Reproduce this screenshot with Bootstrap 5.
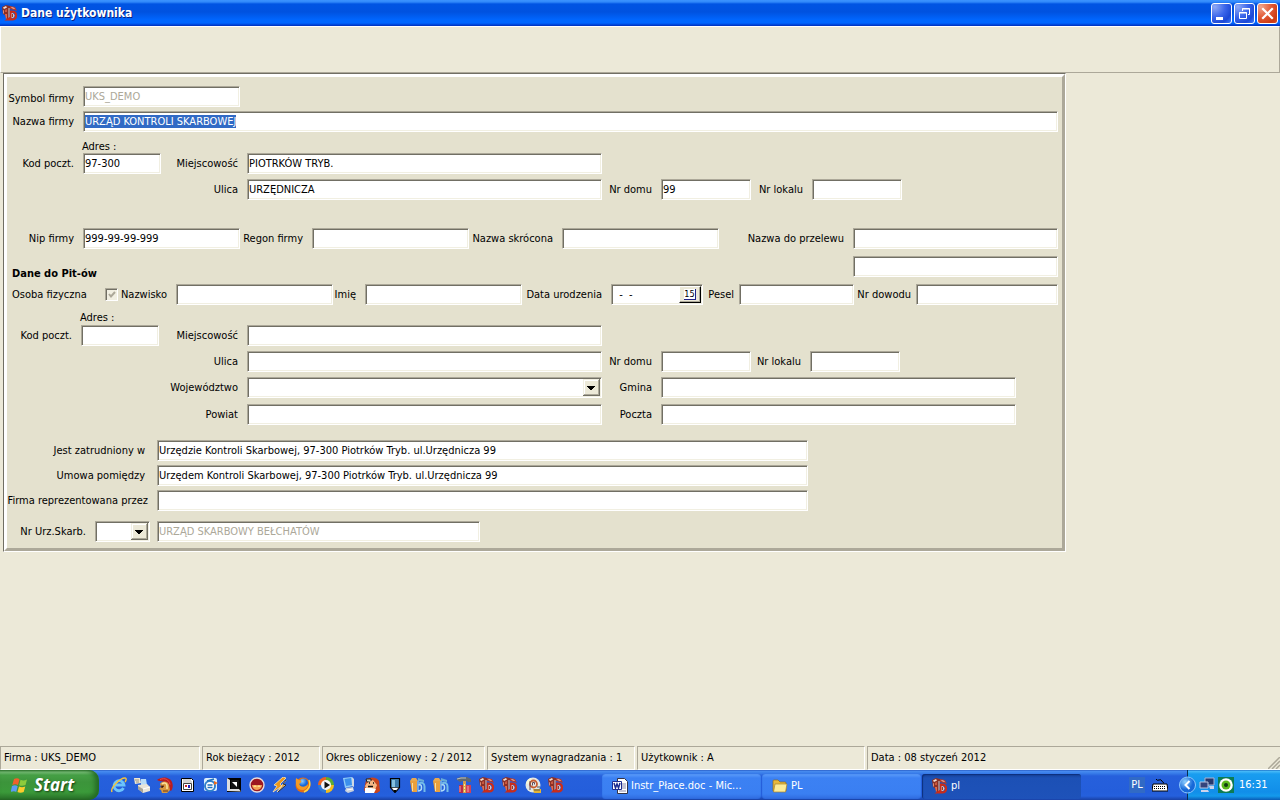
<!DOCTYPE html>
<html lang="pl">
<head>
<meta charset="utf-8">
<meta name="viewport" content="width=device-width, initial-scale=1">
<title>Dane użytkownika</title>
<link href="https://cdn.jsdelivr.net/npm/bootstrap@5.3.0/dist/css/bootstrap.min.css" rel="stylesheet">
<style>
body{font-family:"DejaVu Sans Condensed","DejaVu Sans",sans-serif;font-size:11px;line-height:16px;color:#000;background:#ece9d8}
svg{display:block;flex:none}
/* title bar */
.titlebar{height:26px;padding:0 2px;background:linear-gradient(#3c93ff 0,#3088fa 2px,#0054e3 4px,#0052e0 12px,#0066ff 20px,#0066ff 23px,#0040d4 25px,#002fb8 26px)}
.titlebar h1{font-size:12px;line-height:18px;font-weight:700;color:#fff;text-shadow:1px 1px 0 #0a1f80;padding-left:3px}
.winbtns{gap:2px}
.winbtn{width:21px;height:21px;padding:0;border:1px solid #fff;border-radius:3px;background:radial-gradient(circle at 15% 15%,#8ea9f5,#3b66ea 45%,#1b48d6 75%,#3f7bfa)}
.winbtn.quit{background:radial-gradient(circle at 15% 15%,#f0a58c,#e25a36 45%,#cc3a12 80%,#d8502a)}
.toolstrip{height:47px;border:1px solid;border-color:#fff #aca899 #aca899 #fff}
/* form panel */
.panel-out{max-width:1063px;margin-left:3px;border:1px solid;border-color:#716f64 #fff #fff #716f64}
.panel-in{border:3px solid;border-color:#fff #aca899 #aca899 #fff;background:#e4e1ce;padding:9px 4px 6px 0}
.sp4{margin-top:4px}.sp5{margin-top:5px}.sp6{margin-top:6px}.sp7{margin-top:7px}.sp10{margin-top:10px}.sp15{margin-top:15px}.sp28{margin-top:28px}
.frow{height:21px}
.frow.tall{height:28px}
.frow label{flex:none;text-align:right;padding:1px 9px 0 0;white-space:nowrap}
.frow .tight{padding-right:5px}.frow .wide{padding-right:12px}
.frow .start{text-align:left;padding:1px 0 0 5px}
.adres{line-height:14px;padding:1px 0 0 75px;height:14px}
.adres.low{padding:0 0 0 73px}
.box{height:21px;min-width:0;padding:0 0 1px 1px;font-size:11px;line-height:16px;color:#000;background:#fff;border:1px solid;border-color:#aca899 #fff #fff #aca899;border-radius:0;box-shadow:inset 1px 1px #716f64,inset -1px -1px #f1efe2;outline:0}
.box:disabled{color:#aca899;opacity:1}
.box::selection{background:#316ac5;color:#fff}
.w-c1{width:76px}.w-c2{width:86px}.w-74{width:74px}.w-88{width:88px}.w-u{width:240px}.w-dom{width:59px}.w-lok{width:61px}
.w-150{width:150px}
.i-code{width:78px}.i-mid{width:157px}.i-city{width:355px}.i-nr{width:90px}.i-long{width:651px}.i-pay{width:205px}
.w-72{width:72px}.w-93{width:93px}.w-134{width:134px}.w-98{width:98px}.w-58{width:58px}.w-32{width:32px}.w-89{width:89px}.w-36{width:36px}.w-62{width:62px}
.i-115{width:115px}.i-142{width:142px}.i-322{width:323px}.i-combo{width:55px;margin-right:7px}.i-date{width:92px}
.pit{font-weight:700;padding:0 0 2px 5px;flex:1;align-self:flex-end}
.tick{appearance:none;width:13px;height:13px;margin:0;border:1px solid;border-color:#aca899 #fff #fff #aca899;box-shadow:inset 1px 1px #716f64;background:#f1efe2 url("data:image/svg+xml,%3Csvg xmlns='http://www.w3.org/2000/svg' viewBox='0 0 11 11'%3E%3Cpath d='M3 5l2 2.500 4-4.500' fill='none' stroke='%23aca899' stroke-width='2'/%3E%3C/svg%3E")}
.combo{appearance:none;background:#fff url("data:image/svg+xml,%3Csvg xmlns='http://www.w3.org/2000/svg' width='17' height='17' shape-rendering='crispEdges'%3E%3Cpath fill='%23716f64' d='M0 0h17v17H0z'/%3E%3Cpath fill='%23f1efe2' d='M0 0h16v16H0z'/%3E%3Cpath fill='%23aca899' d='M1 1h15v15H1z'/%3E%3Cpath fill='%23fff' d='M1 1h14v14H1z'/%3E%3Cpath fill='%23ece9d8' d='M2 2h13v13H2z'/%3E%3Cpath d='M4 7h8v1H4zM5 8h6v1H5zM6 9h4v1H6zM7 10h2v1H7z'/%3E%3C/svg%3E") right 1px top 1px no-repeat}
.datebox{display:flex;padding:1px}
.datebox input{border:0;flex:1;min-width:0;padding:0 0 0 3px;background:none;outline:0}
.calbtn{width:22px;height:17px;padding:0 0 1px;display:grid;place-items:center;background:#ece9d8;border:1px solid;border-color:#fff #000 #000 #fff;box-shadow:inset -1px -1px #aca899}
.calbtn span{font-size:9px;line-height:10px;width:12px;height:11px;background:#fff;border-right:1px solid #228;border-bottom:1px solid #228;color:#000}
/* status bar */
.statusbar{gap:2px;height:24px}
.statusbar div{border:1px solid;border-color:#aca899 #fff #fff #aca899;padding:3px 0 0 3px;white-space:nowrap;overflow:hidden}
.st-a{width:200px}.st-b{width:118px}.st-c{width:163px}.st-d{width:148px}.st-e{width:228px}
.statusbar .st-f{display:flex;justify-content:space-between;border-right:0}
.grip{align-self:flex-end}
/* task bar */
.taskbar{height:30px;background:linear-gradient(#1f4fb8 0,#4a8df0 1px,#3a7fea 3px,#2660dc 6px,#245edb 22px,#2560dd 26px,#1941a5 30px)}
.startbtn{width:99px;border:0;padding:0 0 0 11px;gap:5px;border-radius:0 10px 10px 0;color:#fff;font:italic 700 17px/28px "Open Sans","Noto Sans",sans-serif;text-shadow:1px 1px 2px #153d12;background:linear-gradient(#357a35 0,#7fc47d 2px,#46a046 5px,#3c943b 12px,#3b9a3a 22px,#2d7a2c 28px,#235f22);box-shadow:inset -4px 0 5px #246a25}
.quick{padding-left:12px;gap:7px}
.task{width:159px;height:25px;border:0;border-radius:3px;padding:0 0 0 10px;gap:3px;color:#fff;text-align:left;background:linear-gradient(#5c9dfb,#3c81f3 4px,#3a7ff2 20px,#2f6ade);box-shadow:inset 0 0 1px #1a4fc0}
.task.now{background:linear-gradient(#153f93,#1c50b5 4px,#1e52b9);box-shadow:inset 1px 1px 1px #0d2f7c}
.tasks{gap:1px;padding-top:2px}
.lang{color:#fff;background:#316ac5;width:16px;padding:0;border:0;margin:0 7px 0 48px}
.tray{width:93px;height:30px;margin-left:19px;color:#fff;gap:3px;background:linear-gradient(#0c59b9 0,#4cbcf8 1px,#199df0 4px,#118ee9 22px,#149aec 26px,#0a5bb5 30px);border-left:1px solid #092e51}
.tray .fold{margin-left:-9px}
.tray time{padding-left:2px}
</style>
</head>
<body>
<svg width="0" height="0" class="position-absolute">
<defs>
<radialGradient id="ball" cx=".35" cy=".3"><stop offset="0" stop-color="#8fd0ff"/><stop offset="1" stop-color="#1668d8"/></radialGradient>
</defs>
<symbol id="redb" viewBox="0 0 16 16"><path d="M0 2l4-2 4 1v4l-1 9-2 1-2-5-2-1z" fill="#8c3026"/><path d="M1 2.500L4 1l1 1.500L2 4z" fill="#f0dcd0"/><path d="M1 5l1 .5V9L1 8z" fill="#d88c78"/><path d="M3 9h2v4l-1 1z" fill="#e4684c"/><path d="M3 5l2-1v3H3z" fill="#c85840"/><path d="M7 3v10" stroke="#b8b4bc" stroke-width="1.200"/><path d="M8 1l5 1 2 4-3-1-4-1z" fill="#b43c2c"/><path d="M9.500 2.500l3 1" stroke="#f4c0b0"/><path d="M9 6.500h1q4 0 4 4t-4 4H6l3-2z" fill="none" stroke="#cc2c18" stroke-width="2.200"/><path d="M9.500 8h1q2 .5 2 2.500t-2 2.500h-1z" fill="#dcc4c0"/><path d="M10.500 9v3" stroke="#8c3c34"/></symbol>
<symbol id="blueb" viewBox="0 0 16 16"><path d="M0 4h7v11H2z" fill="#eaa03c"/><path d="M0 4l2-3h4l2 3z" fill="#e8a850"/><path d="M2.500 6v8" stroke="#fbdca0" fill="none"/><path d="M8 4v9" stroke="#8cc4ec" stroke-width="1.400"/><path d="M9 6.500c3-2 5.500 0 5.500 3V15" fill="none" stroke="#74bce8" stroke-width="2"/><path d="M8.500 8c3-1 3 1 3 3s-1 3-4 3" stroke="#b0dcf8" stroke-width="1.500" fill="none"/><path d="M8 1l6 2v2L8 4z" fill="#68acd8"/></symbol>
</svg>
<div class="d-flex flex-column min-vh-100">
<header class="titlebar d-flex align-items-center">
<svg width="16" height="16"><use href="#redb"/></svg>
<h1 class="mb-0 me-auto">Dane użytkownika</h1>
<div class="winbtns d-flex">
<button class="winbtn" aria-label="Minimalizuj"><svg width="19" height="19"><path d="M4 13h7v3H4z" fill="#fff"/></svg></button>
<button class="winbtn" aria-label="Przywróć"><svg width="19" height="19" fill="none" stroke="#fff"><path d="M4.500 8.500h7v6h-7zM4 9h8M7.500 7V4.500h7v6H13M7 5h8"/></svg></button>
<button class="winbtn quit" aria-label="Zamknij"><svg width="19" height="19"><path d="M5 5l9 9M14 5l-9 9" stroke="#fff" stroke-width="2.200" stroke-linecap="square"/></svg></button>
</div>
</header>
<div class="toolstrip"></div>
<main class="flex-grow-1">
<div class="panel-out"><form class="panel-in">
<div class="frow d-flex align-items-end"><label class="w-c1" for="sym">Symbol firmy</label><input class="box i-mid" id="sym" value="UKS_DEMO" disabled></div>
<div class="frow d-flex align-items-center sp4"><label class="w-c1" for="naz">Nazwa firmy</label><input class="box flex-grow-1" id="naz" value="URZĄD KONTROLI SKARBOWEJ"></div>
<div class="adres sp7">Adres :</div>
<div class="frow d-flex align-items-center"><label class="w-c1" for="kod">Kod poczt.</label><input class="box i-code" id="kod" value="97-300"><label class="w-c2" for="mie">Miejscowość</label><input class="box i-city" id="mie" value="PIOTRKÓW TRYB."></div>
<div class="frow d-flex align-items-center sp5"><label class="w-u" for="uli">Ulica</label><input class="box i-city" id="uli" value="URZĘDNICZA"><label class="w-dom" for="dom">Nr domu</label><input class="box i-nr" id="dom" value="99"><label class="w-lok" for="lok">Nr lokalu</label><input class="box i-nr" id="lok"></div>
<div class="frow d-flex align-items-center sp28"><label class="w-c1" for="nip">Nip firmy</label><input class="box i-mid" id="nip" value="999-99-99-999"><label class="w-72" for="reg">Regon firmy</label><input class="box i-mid" id="reg"><label class="w-93" for="skr">Nazwa skrócona</label><input class="box i-mid" id="skr"><label class="w-134" for="prz">Nazwa do przelewu</label><input class="box flex-grow-1 i-pay" id="prz"></div>
<div class="frow tall d-flex align-items-start sp7"><div class="pit">Dane do Pit-ów</div><input class="box i-pay" aria-label="Nazwa do przelewu, druga linia"></div>
<div class="frow d-flex align-items-center"><label class="w-98 start" for="oso">Osoba fizyczna</label><input class="tick" type="checkbox" id="oso" checked disabled><label class="w-58" for="nzw">Nazwisko</label><input class="box i-mid" id="nzw"><label class="w-32" for="imi">Imię</label><input class="box i-mid" id="imi"><label class="w-89" for="dat">Data urodzenia</label><div class="box i-date datebox"><input id="dat" value=" -  -"><button type="button" class="calbtn" aria-label="Kalendarz"><span>15</span></button></div><label class="w-36 tight" for="pes">Pesel</label><input class="box i-115" id="pes"><label class="w-62 tight" for="dow">Nr dowodu</label><input class="box i-142 flex-grow-1" id="dow"></div>
<div class="adres low sp6">Adres :</div>
<div class="frow d-flex align-items-center"><label class="w-74" for="kod2">Kod poczt.</label><input class="box i-code" id="kod2"><label class="w-88" for="mie2">Miejscowość</label><input class="box i-city" id="mie2"></div>
<div class="frow d-flex align-items-center sp5"><label class="w-u" for="uli2">Ulica</label><input class="box i-city" id="uli2"><label class="w-dom" for="dom2">Nr domu</label><input class="box i-nr" id="dom2"><label class="w-dom" for="lok2">Nr lokalu</label><input class="box i-nr" id="lok2"></div>
<div class="frow d-flex align-items-center sp5"><label class="w-u" for="woj">Województwo</label><select class="box combo i-city" id="woj"><option></option></select><label class="w-dom" for="gmi">Gmina</label><input class="box i-city" id="gmi"></div>
<div class="frow d-flex align-items-center sp6"><label class="w-u" for="pow">Powiat</label><input class="box i-city" id="pow"><label class="w-dom" for="poc">Poczta</label><input class="box i-city" id="poc"></div>
<div class="frow d-flex align-items-center sp15"><label class="w-150 wide" for="jes">Jest zatrudniony w</label><input class="box i-long" id="jes" value="Urzędzie Kontroli Skarbowej, 97-300 Piotrków Tryb. ul.Urzędnicza 99"></div>
<div class="frow d-flex align-items-center sp4"><label class="w-150 wide" for="umo">Umowa pomiędzy</label><input class="box i-long" id="umo" value="Urzędem Kontroli Skarbowej, 97-300 Piotrków Tryb. ul.Urzędnicza 99"></div>
<div class="frow d-flex align-items-center sp4"><label class="w-150" for="rep">Firma reprezentowana przez</label><input class="box i-long" id="rep"></div>
<div class="frow d-flex align-items-center sp10"><label class="w-88" for="urz">Nr Urz.Skarb.</label><select class="box combo i-combo" id="urz"><option></option></select><input class="box i-322" value="URZĄD SKARBOWY BEŁCHATÓW" disabled aria-label="Nazwa urzędu skarbowego"></div>
</form></div>
</main>
<footer>
<div class="statusbar d-flex"><div class="st-a">Firma : UKS_DEMO</div><div class="st-b">Rok bieżący : 2012</div><div class="st-c">Okres obliczeniowy : 2 / 2012</div><div class="st-d">System wynagradzania : 1</div><div class="st-e">Użytkownik : A</div><div class="st-f flex-grow-1">Data : 08 styczeń 2012<svg class="grip" width="12" height="12"><path d="M0 12L12 0M4 12l8-8M8 12l4-4" stroke="#aca899" stroke-width="1.500"/></svg></div></div>
</footer>
<nav class="taskbar d-flex align-items-center">
<button class="startbtn d-flex align-items-center align-self-stretch"><svg width="18" height="17" viewBox="0 0 18 17"><path d="M3 2c2-1 4-1 5.500.2L7 8C5.500 7 3.500 7 1.300 8z" fill="#f0602c"/><path d="M9.500 2.700c2 1 4 1 6.500-.2L14.500 8c-2 1-4.500 1-6.300.2z" fill="#8ccc3c"/><path d="M1 9c2-1 4-1 5.700.2L5.200 15C4 14 2 14-.3 15z" fill="#5c9cf4"/><path d="M8 9.500c2 1 4 1 6.300 0L12.700 15c-2 1-4.500 1-6.200 0z" fill="#fccc2c"/></svg>Start</button>
<div class="quick d-flex">
<a href="#" aria-label="Internet Explorer"><svg width="16" height="16"><path d="M12.500 11A5 5 0 1 1 13 8H4" fill="none" stroke="#6cc4fc" stroke-width="2.800"/><path d="M1 15C-1 11 9 1 14 1c2 0 1 3 0 4" fill="none" stroke="#f4c43c" stroke-width="1.400"/></svg></a>
<a href="#" aria-label="Drukarka"><svg width="16" height="16"><path d="M0 1h6l1 5-6 1z" fill="#f0e8d0"/><path d="M1 3h4M2 5h3" stroke="#9a9484"/><path d="M7 2h5l1 6H7z" fill="#b8dcf8"/><path d="M4 8l9-1 3 3v4l-7 2-5-4z" fill="#e8e4d8"/><path d="M4 9l5 3v4l-5-4z" fill="#a8a498"/><path d="M9 12l7-2" stroke="#fff"/></svg></a>
<a href="#" aria-label="Hełm"><svg width="16" height="16"><path d="M0 3C4-1 13-.5 15 5c1.500 4 .5 7-1 9l-3-2c2-4 0-7-9-8z" fill="#b81c20"/><path d="M3 2.500c5-2 9 0 10 5" stroke="#ec5048" fill="none"/><path d="M3 7c1-3 8-4 9 1l1 5-3 3H5l-1-3-2-1 2-2z" fill="#d89840"/><path d="M5 7c2-2 5-1 5 2v3" stroke="#fce4a0" fill="none" stroke-width="1.500"/><path d="M4 9h3l-2 2zM6 14h5" stroke="#6c3818"/></svg></a>
<a href="#" aria-label="Kalendarz"><svg width="16" height="16"><path d="M1.500 1.500h10l2 2v11h-12z" fill="#fff" stroke="#000"/><path d="M3 3h8M3 5h9" stroke="#aaa"/><path d="M3.500 6.500h8v6h-8z" fill="#fff" stroke="#444"/><path d="M5 8h2v2H5z" fill="#c22"/><path d="M8 8h2v3H8z" fill="#22b"/></svg></a>
<a href="#" aria-label="Poczta"><svg width="16" height="16"><rect x="1" y="1" width="13" height="13" rx="2" fill="#dceefc"/><circle cx="7" cy="9" r="5" fill="#fff" stroke="#3080cc" stroke-width="2"/><path d="M4.500 8h5M4.500 10.500h5M4 4l7-2" stroke="#2070bc" stroke-width="1.500" fill="none"/><path d="M11 4l4 2-4 2z" fill="#ec6c1c"/></svg></a>
<a href="#" aria-label="Edytor"><svg width="16" height="16"><path d="M1 1h14v14H1z" fill="#000"/><path d="M1 14V1l3 2v9h9l2 2.500z" fill="#ddd"/><path d="M5 3h8v9H5z" fill="#111"/><path d="M6 5l5 5V5z" fill="#fff"/></svg></a>
<a href="#" aria-label="Nagrywarka"><svg width="16" height="16"><circle cx="8" cy="8" r="7" fill="#9c1820" stroke="#e8dcdc" stroke-width="1.400"/><path d="M3 8a5 5 0 0 0 10 0z" fill="#f4a454"/><path d="M4 10l2-2 2 2 2-2 2 2z" fill="#fce090"/></svg></a>
<a href="#" aria-label="Winamp"><svg width="16" height="16"><path d="M11 0L2 8l3 1-4 6 9-6-2-2 6-6zM14 3l-3 4 2 1-8 7z" fill="#ec981c" stroke="#fbe4b0" stroke-width=".8"/><path d="M14 3l-3 4 3 1-8 7" stroke="#333" fill="none"/></svg></a>
<a href="#" aria-label="Firefox"><svg width="16" height="16"><circle cx="8" cy="8" r="7.500" fill="#e46c14"/><circle cx="8.500" cy="6" r="4.500" fill="url(#ball)"/><path d="M1 1l3 2c4 0 2 3 0 4 1 3 6 4 9 0 0 4-3 6-6 6C2 13 0 8 1 1z" fill="#f49a24"/><path d="M14 3c2 5 0 10-5 12" stroke="#fcd444" fill="none" stroke-width="1.500"/></svg></a>
<a href="#" aria-label="Media Player"><svg width="16" height="16"><path d="M8 0v8H0a8 8 0 0 1 8-8z" fill="#ec6420"/><path d="M8 0v8h8a8 8 0 0 0-8-8z" fill="#5cac34"/><path d="M0 8h8v8a8 8 0 0 1-8-8z" fill="#2c78d8"/><path d="M8 8h8a8 8 0 0 1-8 8z" fill="#f4bc1c"/><circle cx="8" cy="8" r="5" fill="#f4f4f8"/><path d="M6.500 4.500L12 8l-5.500 3.500z" fill="#111"/></svg></a>
<a href="#" aria-label="Pulpit"><svg width="16" height="16"><path d="M2 1l9-1 1 9-8 2z" fill="#90ccf8"/><path d="M3.500 2l6.500-1 1 7-6 1z" fill="#3c90ec"/><path d="M11 0l2 2v8l-2-1z" fill="#d0d8e4"/><path d="M5 11l7-1 1 4-6 2-3-2z" fill="#c8d0dc"/><path d="M6 13l6-1" stroke="#fff"/></svg></a>
<a href="#" aria-label="Postać"><svg width="16" height="16"><path d="M2 3c4-4 11-3 13 1l1 10-3 2H2l-2-3z" fill="#c8441c"/><path d="M2 2h5v3H3z" fill="#d8d0c0" stroke="#222"/><path d="M3 6l6-3 4 5-2 5H3L1 9z" fill="#f4b884"/><path d="M1 11h6l5 1-2 4H1z" fill="#fff"/><path d="M5 6h1M9 6h1M4 9.500h5" stroke="#111" stroke-width="1.500"/></svg></a>
<a href="#" aria-label="Pisak"><svg width="16" height="16"><path d="M3.500 1.500h9v9l-4.500 5-4.500-5z" fill="#3c7cac" stroke="#000" stroke-width="1.200"/><path d="M5 3h3v7H5z" fill="#84c0e0"/><path d="M4 10.500h8l-4 4.500z" fill="#fff" stroke="#000" stroke-width=".6"/><path d="M7 13h2v2H7z"/></svg></a>
<a href="#" aria-label="Program"><svg width="16" height="16"><use href="#blueb"/></svg></a>
<a href="#" aria-label="Program 2"><svg width="16" height="16"><use href="#blueb"/></svg></a>
<a href="#" aria-label="Narzędzia"><svg width="16" height="16"><path d="M0 2l4-2h7l4 2v3h-3L11 4H7L4 5z" fill="#606870"/><path d="M1 2l4-1h5" stroke="#b8c0c4" fill="none"/><path d="M7 4h3v12H7z" fill="#d49c4c"/><path d="M3 8h4v8H3z" fill="#b82c48"/><path d="M4 9v6" stroke="#f0a0b0"/><path d="M10 8h5v8h-5z" fill="#d04058"/><path d="M8.500 7v8" stroke="#fcec8c" stroke-dasharray="2 1"/><path d="M12 9v6" stroke="#f0a0b0"/></svg></a>
<a href="#" aria-label="Płace"><svg width="16" height="16"><use href="#redb"/></svg></a>
<a href="#" aria-label="Kadry"><svg width="16" height="16"><use href="#redb"/></svg></a>
<a href="#" aria-label="Płyta"><svg width="16" height="16"><circle cx="8" cy="8" r="7.500" fill="#e4e8e4"/><path d="M1 7a7 7 0 0 1 5-6l2 5z" fill="#f8f8d8"/><circle cx="8.500" cy="7" r="3.500" fill="none" stroke="#c85c30" stroke-width="1.800"/><path d="M5 4v9M7.500 8.500V5.500h2v2" stroke="#604858" fill="none"/><path d="M8 12h8v4H9z" fill="#e4b434"/><path d="M9 13h6M12 10h3" stroke="#555"/></svg></a>
<a href="#" aria-label="Finanse"><svg width="16" height="16"><use href="#redb"/></svg></a>
</div>
<div class="tasks d-flex ms-auto">
<button class="task d-flex align-items-center"><svg width="16" height="16"><path d="M5.500.5h7l3 3v12h-10z" fill="#fff" stroke="#334"/><path d="M10 6h4M10 8h4M10 10h4M7 13h7" stroke="#88a"/><path d="M.5 3.500h9v8h-9z" fill="#fff" stroke="#1c2c90"/><path d="M2 5l1.500 5L5 6l1.500 4L8 5" fill="none" stroke="#1c2c90" stroke-width="1.500"/></svg>Instr_Płace.doc - Mic...</button>
<button class="task d-flex align-items-center"><svg width="16" height="16"><path d="M1 3q0-1 1-1h4l2 2h5q1 0 1 1v8H1z" fill="#e8b83c" stroke="#8c6c1c" stroke-width=".7"/><path d="M3 6h12l-1.500 8H1.500z" fill="#fcec98" stroke="#a8842c" stroke-width=".7"/></svg>PL</button>
<button class="task now d-flex align-items-center"><svg width="16" height="16"><use href="#redb"/></svg>pl</button>
</div>
<button class="lang">PL</button>
<svg width="16" height="14"><path d="M4 1q1 2 3 1t3 1 2 2" fill="none" stroke="#000"/><path d="M1 6h14l1 7H0z" fill="#fff" stroke="#000"/><path d="M2 8.500h12M2 10.500h12" stroke="#000" stroke-dasharray="1 1"/></svg>
<div class="tray d-flex align-items-center"><svg class="fold" width="17" height="18"><circle cx="8.500" cy="9" r="8" fill="url(#ball)" stroke="#8cc8fc"/><path d="M10.500 5L6.500 9l4 4" fill="none" stroke="#fff" stroke-width="2"/></svg>
<svg width="16" height="16"><path d="M6 1h9v7H6z" fill="#28386c" stroke="#a8b4d4"/><path d="M1 5h8v6H1z" fill="#34447c" stroke="#b8c4e0"/><path d="M2 13h7l1 2H2zM10 9h5v3h-4z" fill="#ccd4ec"/></svg>
<svg width="16" height="16"><path d="M0 0h16v16H0z" fill="#0c7c54"/><circle cx="8" cy="8" r="6.800" fill="#fff"/><circle cx="8" cy="8" r="4.500" fill="#5cb81c"/><circle cx="8" cy="8" r="2" fill="#103c10"/></svg>
<time>16:31</time></div>
</nav>
</div>
<script src="https://cdn.jsdelivr.net/npm/bootstrap@5.3.0/dist/js/bootstrap.bundle.min.js"></script>
<script>document.getElementById('naz').select();</script>
</body>
</html>
